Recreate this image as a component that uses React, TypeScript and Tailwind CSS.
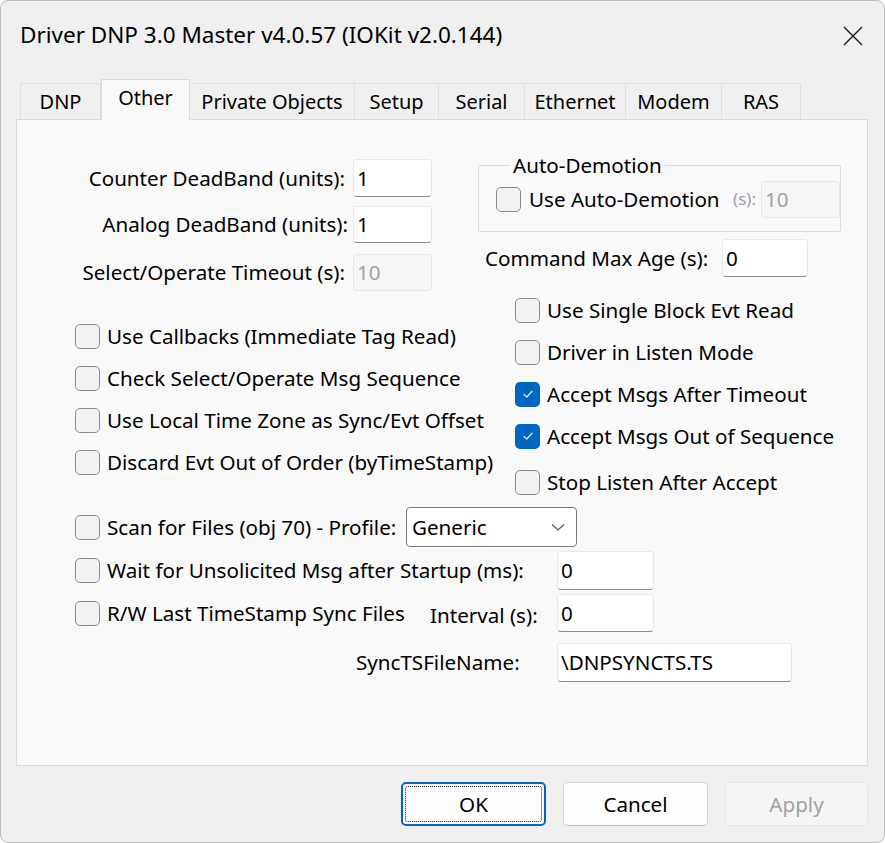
import type { ReactNode } from "react";

type CheckProps = {
  label: string;
  checked?: boolean;
};

function CheckBox({ checked = false }: { checked?: boolean }) {
  if (checked) {
    return (
      <span className="flex h-[25px] w-[25px] shrink-0 items-center justify-center rounded-[5px] bg-[#0067c0]">
        <svg width="14" height="14" viewBox="0 0 14 14" fill="none">
          <path
            d="M3 7.4 L5.8 10 L11 4.2"
            stroke="#dbe8f7"
            strokeWidth="1.3"
            strokeLinecap="round"
            strokeLinejoin="round"
          />
        </svg>
      </span>
    );
  }
  return (
    <span className="h-[25px] w-[25px] shrink-0 rounded-[5px] border border-[#8b8b8b] bg-[#f3f3f3]" />
  );
}

function Check({ label, checked }: CheckProps) {
  return (
    <div className="flex h-[42px] items-center gap-[7px]">
      <CheckBox checked={checked} />
      <span className="whitespace-nowrap pb-[1px]">{label}</span>
    </div>
  );
}

function Field({
  value,
  width,
  height = 38,
  disabled = false,
}: {
  value: string;
  width: string;
  height?: number;
  disabled?: boolean;
}) {
  const base = disabled
    ? "bg-[#f6f6f6] border border-[#e6e6e6] text-[#a2a2a2]"
    : "bg-white border border-[#e8e8e8] border-b-[#8a8a8a] text-black";
  return (
    <div
      className={`flex shrink-0 items-center rounded-[4px] pb-[1px] pl-[3px] ${base} ${width}`}
      style={{ height }}
    >
      {value}
    </div>
  );
}

function Tab({
  children,
  width,
  active = false,
}: {
  children: ReactNode;
  width: string;
  active?: boolean;
}) {
  if (active) {
    return (
      <div
        className={`relative z-10 -mb-px flex h-[41px] items-center justify-center border border-b-0 border-[#dadada] bg-[#f9f9f9] pb-[4px] ${width}`}
      >
        {children}
      </div>
    );
  }
  return (
    <div
      className={`flex h-[36px] items-center justify-center border border-b-0 border-l-0 border-[#e0e0e0] bg-[#f0f0f0] first:border-l ${width}`}
    >
      {children}
    </div>
  );
}

function DialogButton({
  children,
  kind,
}: {
  children: ReactNode;
  kind: "default" | "normal" | "disabled";
}) {
  if (kind === "default") {
    return (
      <div className="flex h-[44px] w-[145px] items-center justify-center rounded-[5px] border-2 border-[#0067c0] bg-[#fdfdfd] p-[2px]">
        <div className="flex h-full w-full items-center justify-center rounded-[3px] border border-dotted border-[#222]">
          {children}
        </div>
      </div>
    );
  }
  if (kind === "disabled") {
    return (
      <div className="flex h-[44px] w-[143px] items-center justify-center rounded-[5px] border border-[#e6e6e6] bg-[#f5f5f5] text-[#a0a0a0]">
        {children}
      </div>
    );
  }
  return (
    <div className="flex h-[44px] w-[145px] items-center justify-center rounded-[5px] border border-[#d4d4d4] border-b-[#bcbcbc] bg-[#fdfdfd]">
      {children}
    </div>
  );
}

export default function App() {
  return (
    <div className="h-[843px] w-[885px] overflow-hidden rounded-[8px] border border-[#bdbdbd] bg-[#f0f0f0] font-['Noto_Sans',sans-serif] text-[20.6px] leading-[24px] text-black">
      {/* title bar */}
      <div className="flex h-[69px] items-center justify-between pl-[19px] pr-[19px]">
        <span className="pb-[1px] text-[22.5px]">
          Driver DNP 3.0 Master v4.0.57 (IOKit v2.0.144)
        </span>
        <svg width="22" height="22" viewBox="0 0 22 22" className="mr-[1px]">
          <path
            d="M2 2 L20 20 M20 2 L2 20"
            stroke="#1a1a1a"
            strokeWidth="1.4"
          />
        </svg>
      </div>

      {/* tabs */}
      <div className="mt-[9px] flex items-end pl-[19px] text-[20px]">
        <Tab width="w-[81px]">DNP</Tab>
        <Tab width="w-[89px]" active>
          Other
        </Tab>
        <Tab width="w-[165px]">Private Objects</Tab>
        <Tab width="w-[84px]">Setup</Tab>
        <Tab width="w-[86px]">Serial</Tab>
        <Tab width="w-[101px]">Ethernet</Tab>
        <Tab width="w-[96px]">Modem</Tab>
        <Tab width="w-[79px]">RAS</Tab>
      </div>

      {/* page */}
      <div className="ml-[15px] h-[647px] w-[852px] border border-[#dadada] bg-[#f9f9f9]">
        <div className="flex h-[381px]">
          {/* left column */}
          <div className="w-[461px] pt-[39px]">
            <div className="flex h-[38px] items-center">
              <span className="w-[328px] whitespace-nowrap pb-[1px] text-right">
                Counter DeadBand (units):
              </span>
              <div className="ml-[8px]">
                <Field value="1" width="w-[79px]" />
              </div>
            </div>
            <div className="mt-[9px] flex h-[37px] items-center">
              <span className="w-[331px] whitespace-nowrap pb-[1px] text-right">
                Analog DeadBand (units):
              </span>
              <div className="ml-[5px]">
                <Field value="1" width="w-[79px]" height={37} />
              </div>
            </div>
            <div className="mt-[11px] flex h-[37px] items-center">
              <span className="w-[328px] whitespace-nowrap pb-[1px] text-right">
                Select/Operate Timeout (s):
              </span>
              <div className="ml-[8px]">
                <Field value="10" width="w-[79px]" height={37} disabled />
              </div>
            </div>

            <div className="mt-[24px] pl-[58px]">
              <Check label="Use Callbacks (Immediate Tag Read)" />
              <Check label="Check Select/Operate Msg Sequence" />
              <Check label="Use Local Time Zone as Sync/Evt Offset" />
              <Check label="Discard Evt Out of Order (byTimeStamp)" />
            </div>
          </div>

          {/* right column */}
          <div className="w-[363px] pt-[33px]">
            <fieldset className="h-[79px] rounded-[2px] border border-[#dcdcdc] pl-[17px]">
              <legend className="ml-[14px] px-[3px]">Auto-Demotion</legend>
              <div className="mt-[3px] flex h-[38px] items-center">
                <CheckBox />
                <span className="ml-[8px] whitespace-nowrap pb-[1px]">
                  Use Auto-Demotion
                </span>
                <span className="ml-auto mr-[5px] text-[17px] text-[#a0a0a0]">
                  (s):
                </span>
                <Field value="10" width="w-[79px]" height={37} disabled />
              </div>
            </fieldset>

            <div className="mt-[7px] flex h-[38px] items-center pl-[7px]">
              <span className="w-[237px] whitespace-nowrap pb-[1px]">
                Command Max Age (s):
              </span>
              <Field value="0" width="w-[86px]" />
            </div>

            <div className="mt-[12px] pl-[37px]">
              <Check label="Use Single Block Evt Read" />
              <Check label="Driver in Listen Mode" />
              <Check label="Accept Msgs After Timeout" checked />
              <Check label="Accept Msgs Out of Sequence" checked />
              <div className="mt-[4px]">
                <Check label="Stop Listen After Accept" />
              </div>
            </div>
          </div>
        </div>

        {/* lower rows */}
        <div className="mt-[6px] pl-[58px]">
          <div className="flex h-[40px] items-center">
            <div className="flex w-[331px] items-center gap-[7px]">
              <CheckBox />
              <span className="whitespace-nowrap pb-[1px]">
                Scan for Files (obj 70) - Profile:
              </span>
            </div>
            <div className="flex h-[40px] w-[171px] items-center justify-between rounded-[4px] border border-[#7a7a7a] bg-white pl-[5px] pr-[10px]">
              <span className="pb-[1px]">Generic</span>
              <svg width="16" height="10" viewBox="0 0 16 10" fill="none">
                <path
                  d="M2 2.5 L8 8 L14 2.5"
                  stroke="#555"
                  strokeWidth="1.2"
                />
              </svg>
            </div>
          </div>

          <div className="mt-[3px] flex h-[40px] items-center">
            <div className="flex w-[482px] items-center gap-[7px]">
              <CheckBox />
              <span className="whitespace-nowrap pb-[1px]">
                Wait for Unsolicited Msg after Startup (ms):
              </span>
            </div>
            <Field value="0" width="w-[97px]" height={39} />
          </div>

          <div className="mt-[3px] flex h-[40px] items-center">
            <div className="flex w-[355px] items-center gap-[7px]">
              <CheckBox />
              <span className="whitespace-nowrap pb-[1px]">
                R/W Last TimeStamp Sync Files
              </span>
            </div>
            <span className="w-[127px] whitespace-nowrap pt-[4px]">
              Interval (s):
            </span>
            <Field value="0" width="w-[97px]" />
          </div>

          <div className="mt-[10px] flex h-[39px] items-center">
            <span className="ml-[281px] w-[201px] whitespace-nowrap pb-[1px]">
              SyncTSFileName:
            </span>
            <Field value="\DNPSYNCTS.TS" width="w-[235px]" height={39} />
          </div>
        </div>
      </div>

      {/* buttons */}
      <div className="mt-[16px] flex justify-end gap-[17px] pr-[16px]">
        <DialogButton kind="default">OK</DialogButton>
        <DialogButton kind="normal">Cancel</DialogButton>
        <DialogButton kind="disabled">Apply</DialogButton>
      </div>
    </div>
  );
}
